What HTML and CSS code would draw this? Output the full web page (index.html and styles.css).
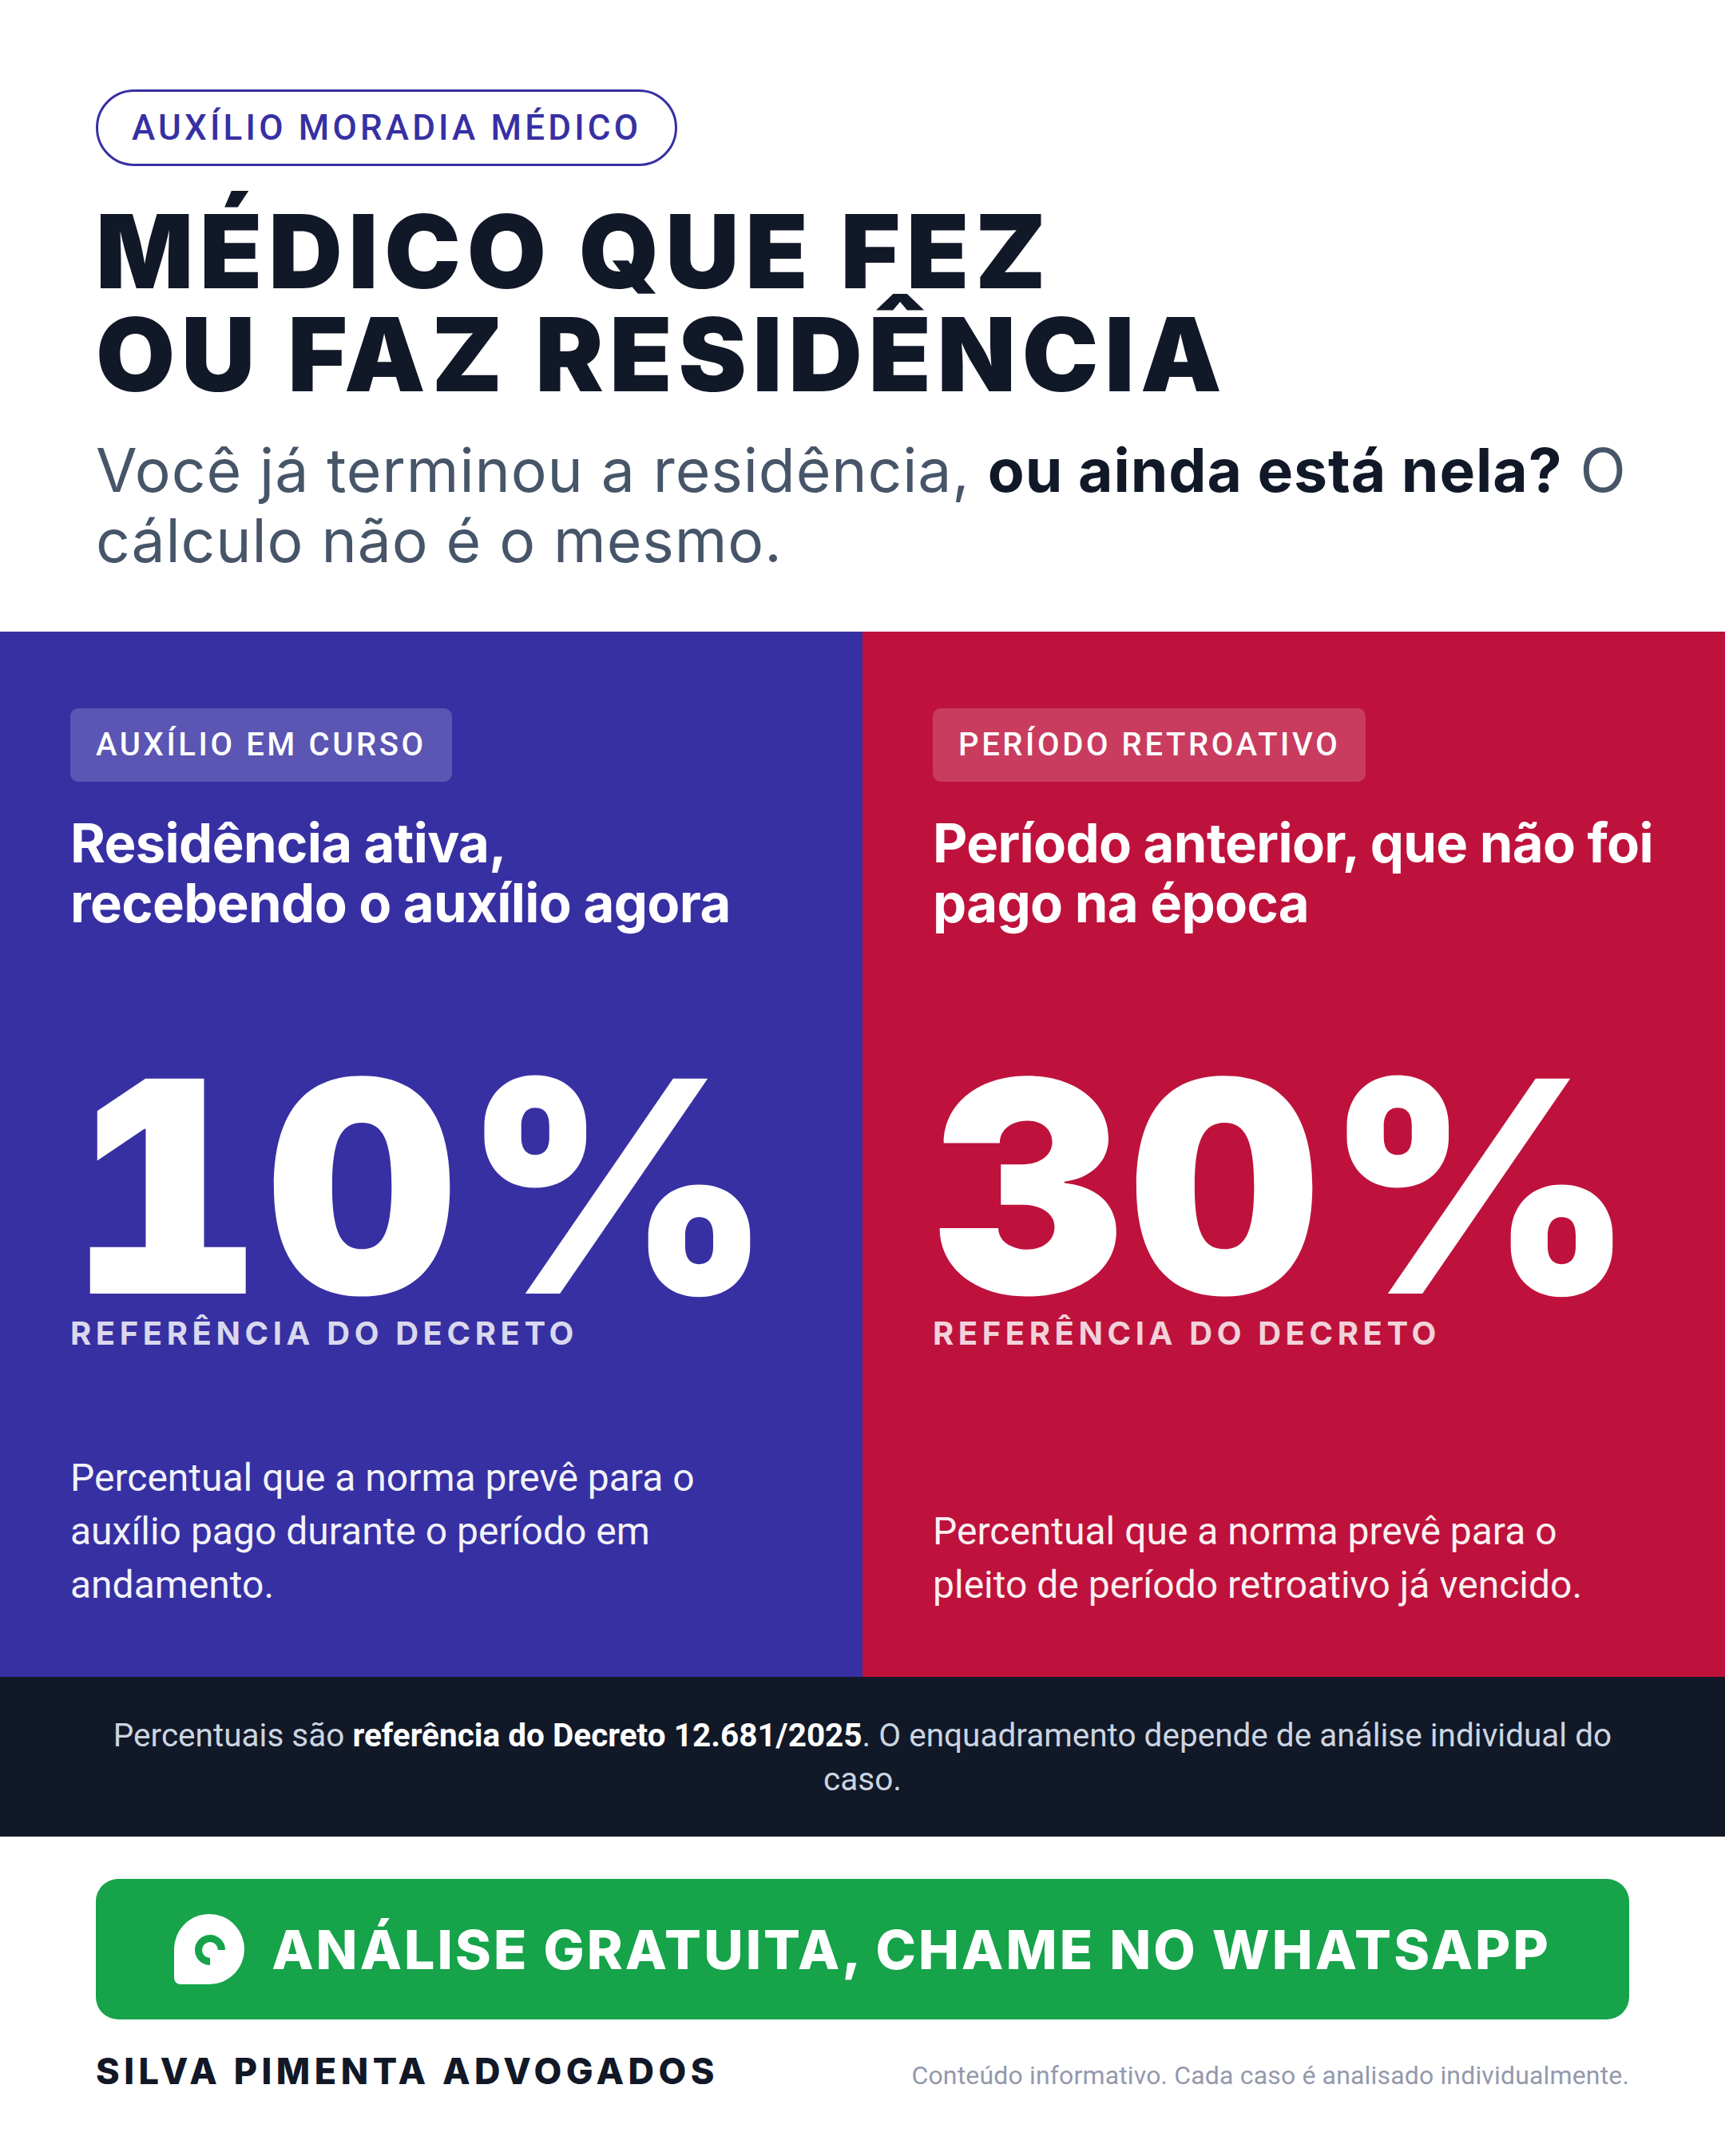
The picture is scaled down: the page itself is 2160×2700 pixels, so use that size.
FILE: index.html
```html
<!DOCTYPE html>
<html lang="pt-BR">
<head>
<meta charset="utf-8">
<title>Auxílio Moradia Médico</title>
<link rel="stylesheet" href="styles.css">
</head>
<body>
<div class="page">
  <header class="intro">
    <span class="eyebrow">AUXÍLIO MORADIA MÉDICO</span>
    <h1 class="title">MÉDICO QUE FEZ<br>OU FAZ RESIDÊNCIA</h1>
    <p class="lead">Você já terminou a residência, <strong>ou ainda está nela?</strong> O cálculo não é o mesmo.</p>
  </header>

  <section class="compare">
    <article class="panel panel-current">
      <span class="tag">AUXÍLIO EM CURSO</span>
      <h2 class="panel-title">Residência ativa,<br>recebendo o auxílio agora</h2>
      <div class="figure">10%</div>
      <div class="figure-label">REFERÊNCIA DO DECRETO</div>
      <p class="panel-text">Percentual que a norma prevê para o auxílio pago durante o período em andamento.</p>
    </article>
    <article class="panel panel-retro">
      <span class="tag">PERÍODO RETROATIVO</span>
      <h2 class="panel-title">Período anterior, que não foi<br>pago na época</h2>
      <div class="figure">30%</div>
      <div class="figure-label">REFERÊNCIA DO DECRETO</div>
      <p class="panel-text">Percentual que a norma prevê para o pleito de período retroativo já vencido.</p>
    </article>
  </section>

  <div class="note-band">
    <p>Percentuais são <strong>referência do Decreto 12.681/2025</strong>. O enquadramento depende de análise individual do caso.</p>
  </div>

  <div class="cta-wrap">
    <a class="cta" href="#">
      <svg class="cta-icon" viewBox="0 0 88 88" width="88" height="88" aria-hidden="true">
        <path d="M44 0A44 44 0 0 1 88 44A44 44 0 0 1 44 88H8A8 8 0 0 1 0 80V44A44 44 0 0 1 44 0Z" fill="#ffffff"/>
        <path d="M59.5 45A14.5 14.5 0 1 0 45 59.5" fill="none" stroke="#16a34a" stroke-width="9"/>
      </svg>
      <span>ANÁLISE GRATUITA, CHAME NO WHATSAPP</span>
    </a>
  </div>

  <footer class="footer">
    <span class="brand">SILVA PIMENTA ADVOGADOS</span>
    <span class="disclaimer">Conteúdo informativo. Cada caso é analisado individualmente.</span>
  </footer>
</div>
</body>
</html>
```

FILE: styles.css
```css
* { box-sizing: border-box; }

html, body {
  margin: 0;
  padding: 0;
  background: #ffffff;
}

body {
  font-family: Roboto, "Liberation Sans", sans-serif;
  color: #111827;
}

.page {
  width: 2160px;
  display: flex;
  flex-direction: column;
}

/* ---------- Intro ---------- */
.intro {
  display: flex;
  flex-direction: column;
  align-items: flex-start;
  padding: 112px 120px 70px;
}

.eyebrow {
  display: inline-block;
  border: 3px solid #3730a3;
  border-radius: 999px;
  padding: 23px 42px;
  color: #3730a3;
  font-family: Roboto, "Liberation Sans", sans-serif;
  font-weight: 500;
  font-size: 44px;
  line-height: 1;
  letter-spacing: 0.095em;
}

.title {
  margin: 42px 0 0;
  font-family: Inter, "Liberation Sans", sans-serif;
  font-weight: 900;
  font-size: 128px;
  line-height: 129px;
  letter-spacing: 0.06em;
  color: #111827;
}

.lead {
  margin: 37px 0 0;
  font-family: Inter, "Liberation Sans", sans-serif;
  font-size: 75px;
  line-height: 88px;
  letter-spacing: 0.012em;
  color: #475569;
}

.lead strong {
  font-weight: 700;
  color: #111827;
}

/* ---------- Compare panels ---------- */
.compare {
  display: grid;
  grid-template-columns: 1fr 1fr;
  height: 1309px;
}

.panel {
  display: flex;
  flex-direction: column;
  align-items: flex-start;
  padding: 96px 88px 82px;
  color: #ffffff;
}

.panel-current { background: #3730a3; }
.panel-retro { background: #be123c; }

.tag {
  display: inline-block;
  padding: 26px 32px;
  border-radius: 10px;
  background: rgba(255, 255, 255, 0.18);
  font-family: Roboto, "Liberation Sans", sans-serif;
  font-weight: 500;
  font-size: 40px;
  line-height: 1;
  letter-spacing: 0.09em;
}

.panel-title {
  margin: 39px 0 0;
  font-family: Inter, "Liberation Sans", sans-serif;
  font-weight: 700;
  font-size: 67px;
  line-height: 75px;
  letter-spacing: -0.01em;
}

.figure {
  margin-top: 170px;
  font-family: Inter, "Liberation Sans", sans-serif;
  font-weight: 900;
  font-size: 370px;
  line-height: 0.8;
  letter-spacing: 0.02em;
  font-variant-numeric: tabular-nums;
}

.figure-label {
  margin-top: 16px;
  font-family: Inter, "Liberation Sans", sans-serif;
  font-weight: 700;
  font-size: 40px;
  line-height: 1;
  letter-spacing: 0.14em;
  color: rgba(255, 255, 255, 0.82);
}

.panel-text {
  margin: auto 0 0;
  max-width: 860px;
  font-family: Roboto, "Liberation Sans", sans-serif;
  font-size: 48px;
  line-height: 67px;
  color: rgba(255, 255, 255, 0.95);
}

/* ---------- Note band ---------- */
.note-band {
  background: #111827;
  padding: 46px 120px 44px;
  text-align: center;
}

.note-band p {
  margin: 0;
  font-family: Roboto, "Liberation Sans", sans-serif;
  font-size: 40.5px;
  line-height: 55px;
  color: #cbd5e1;
}

.note-band strong {
  font-weight: 700;
  color: #ffffff;
}

/* ---------- CTA ---------- */
.cta-wrap {
  padding: 53px 120px 0;
}

.cta {
  display: flex;
  align-items: center;
  justify-content: center;
  gap: 34px;
  padding: 44px;
  border-radius: 28px;
  background: #16a34a;
  color: #ffffff;
  text-decoration: none;
  font-family: Inter, "Liberation Sans", sans-serif;
  font-weight: 800;
  font-size: 68px;
  line-height: 1;
  letter-spacing: 0.045em;
}

.cta-icon {
  display: block;
  flex: none;
}

/* ---------- Footer ---------- */
.footer {
  display: flex;
  justify-content: space-between;
  align-items: baseline;
  padding: 42px 120px 80px;
}

.brand {
  font-family: Inter, "Liberation Sans", sans-serif;
  font-weight: 800;
  font-size: 45px;
  line-height: 1;
  letter-spacing: 0.122em;
  color: #111827;
}

.disclaimer {
  font-family: Roboto, "Liberation Sans", sans-serif;
  font-size: 32px;
  line-height: 1;
  letter-spacing: 0.005em;
  color: #9399ad;
}
```
